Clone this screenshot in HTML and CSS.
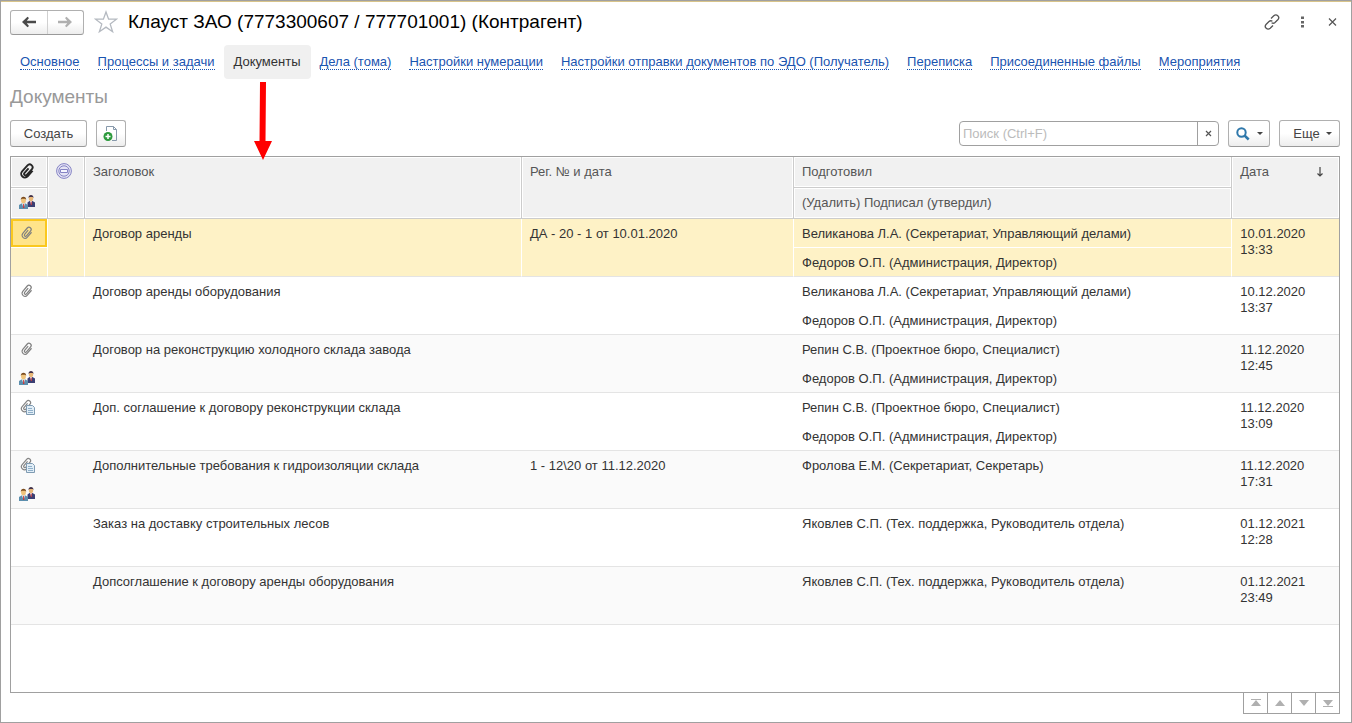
FILE: index.html
```html
<!DOCTYPE html>
<html lang="ru">
<head>
<meta charset="utf-8">
<title>Клауст ЗАО (Контрагент)</title>
<link rel="stylesheet" href="styles.css">
</head>
<body>
<svg class="defs" aria-hidden="true">
  <symbol id="clip" viewBox="0 0 16 16">
    <path transform="rotate(40 8 8)" d="M11 4.500V11a3 3 0 0 1-6 0V4a2.200 2.200 0 0 1 4.400 0v6.500a1.200 1.200 0 0 1-2.400 0V5" fill="none" stroke="currentColor" stroke-width="1.200"/>
  </symbol>
  <symbol id="clipbold" viewBox="0 0 16 16">
    <path transform="rotate(42 8 8)" d="M12 4v7.500a3.700 3.700 0 0 1-7.400 0v-8a2.900 2.900 0 0 1 5.800 0v7.500a1.500 1.500 0 0 1-3 0V5" fill="none" stroke="#262626" stroke-width="1.900"/>
  </symbol>
  <symbol id="clipdoc" viewBox="0 0 16 16">
    <path transform="rotate(40 7 7)" d="M10.500 3.500V10a3 3 0 0 1-6 0V3a2.200 2.200 0 0 1 4.400 0v6.500a1.200 1.200 0 0 1-2.400 0V4" fill="none" stroke="#858585" stroke-width="1.200"/>
    <path d="M7.500 6.500h6l2 2v7h-8z" fill="#e2eef7" stroke="#7f9bb2"/>
    <path d="M9 9.500h4M9 11.500h5M9 13.500h5" stroke="#8fb0ca"/>
  </symbol>
  <symbol id="people" viewBox="0 0 16 16">
    <path d="M8.500 12V8.500L10.500 7h3L16 8.500V13H9z" fill="#3c3f73"/>
    <path d="M11 7h2l-.8 4z" fill="#fff"/><path d="M11.700 7.500h.9l.2 3.500h-1z" fill="#c33"/>
    <ellipse cx="12" cy="4.500" rx="2.200" ry="2.800" fill="#e8b878"/>
    <path d="M9.500 4c-.3-4 5.300-4 5 0l-.8-1h-3.200z" fill="#43324a"/>
    <path d="M0 15v-4l2.500-1.500h4L9 11v4z" fill="#5c8fae"/>
    <path d="M3 9.500h3L4.600 14z" fill="#fff"/><path d="M4.200 10h.9l.3 4h-1.400z" fill="#c33"/>
    <ellipse cx="4.500" cy="6.500" rx="2.400" ry="3" fill="#f0c47c"/>
    <path d="M1.800 6c-.3-4.300 5.700-4.300 5.400 0l-.9-1.300H2.700z" fill="#7a4a1c"/>
  </symbol>
</svg>
<div class="window">
  <header class="titlebar">
    <div class="history">
      <button type="button" aria-label="Назад"><svg width="16" height="12" viewBox="0 0 16 12"><path d="M1 6 6.500.8 8 2 5.800 4.800H15v2.400H5.800L8 10l-1.500 1.200z" fill="#4a4a4a"/></svg></button>
      <button type="button" aria-label="Вперед"><svg width="16" height="12" viewBox="0 0 16 12"><path d="M15 6 9.500.8 8 2l2.200 2.800H1v2.400h9.200L8 10l1.500 1.200z" fill="#b0b0b0"/></svg></button>
    </div>
    <button type="button" class="plain star" aria-label="В избранное"><svg width="24" height="24" viewBox="0 0 24 24"><path d="m12 2 2.600 7.200h7.900l-6.300 4.900 2.400 7.600-6.600-4.600-6.600 4.600 2.400-7.600-6.300-4.900h7.900z" fill="#fff" stroke="#b4b9c0" stroke-width="1.300"/></svg></button>
    <h1>Клауст ЗАО (7773300607 / 777701001) (Контрагент)</h1>
    <div class="winbuttons">
      <button type="button" class="plain" aria-label="Ссылка"><svg width="16" height="16" viewBox="0 0 16 16"><g fill="none" stroke="#555" stroke-width="1.300"><path d="M7 4.500 9.800 1.800c2.700-2.400 6.500.9 4.200 3.700l-3 3c-1 .9-2.400.9-3.400.2"/><path d="M9 11.500 6.200 14.200c-2.700 2.400-6.500-.9-4.200-3.700l3-3c1-.9 2.400-.9 3.400-.2"/></g></svg></button>
      <button type="button" class="plain" aria-label="Меню"><svg width="16" height="16" viewBox="0 0 16 16"><path d="M7 2.500h3v2.500H7zM7 7h3v2.500H7zM7 11h3v2.500H7z" fill="#666"/></svg></button>
      <button type="button" class="plain" aria-label="Закрыть"><svg width="16" height="16" viewBox="0 0 16 16"><path d="m5 4.500 7 7m0-7-7 7" stroke="#555" stroke-width="1.200"/></svg></button>
    </div>
  </header>
  <nav class="tabs">
    <a href="#">Основное</a>
    <a href="#">Процессы и задачи</a>
    <a href="#" class="active" aria-current="page">Документы<svg class="pointer" width="20" height="78" viewBox="0 0 20 78" aria-hidden="true"><path d="M7 0h6l-.5 59H19L10 78 1 59h5.500z" fill="#f00"/></svg></a>
    <a href="#">Дела (тома)</a>
    <a href="#">Настройки нумерации</a>
    <a href="#">Настройки отправки документов по ЭДО (Получатель)</a>
    <a href="#">Переписка</a>
    <a href="#">Присоединенные файлы</a>
    <a href="#">Мероприятия</a>
  </nav>
  <h2>Документы</h2>
  <div class="toolbar">
    <button type="button" class="btn create">Создать</button>
    <button type="button" class="btn add" aria-label="Создать из файла"><svg width="16" height="16" viewBox="0 0 16 16"><path d="M3.500 5V.500h7l3 3v11H9M10.500.500v3h3" fill="none" stroke="#8799ab"/><circle cx="5" cy="10.500" r="4.500" fill="#2c9a3c"/><path d="M5 8v5M2.500 10.500h5" stroke="#fff" stroke-width="1.500"/></svg></button>
    <div class="search">
      <input type="text" placeholder="Поиск (Ctrl+F)" aria-label="Поиск">
      <button type="button" aria-label="Очистить"><svg width="7" height="7" viewBox="0 0 7 7"><path d="m1 1 5 5m0-5L1 6" stroke="#555" stroke-width="1.200"/></svg></button>
    </div>
    <button type="button" class="btn find" aria-label="Найти"><svg width="14" height="14" viewBox="0 0 14 14"><circle cx="5.500" cy="5.500" r="4.200" fill="none" stroke="#2f78ab" stroke-width="2"/><path d="m8.500 8.500 4.200 4" stroke="#2f78ab" stroke-width="2.500"/></svg><span class="caret"></span></button>
    <button type="button" class="btn more">Еще<span class="caret"></span></button>
  </div>
  <main class="list">
    <table>
      <colgroup><col class="c-icon"><col class="c-icon"><col class="c-title"><col class="c-reg"><col class="c-person"><col></colgroup>
      <thead>
        <tr>
          <th class="ic"><svg class="i" role="img" aria-label="Файлы"><use href="#clipbold"/></svg></th>
          <th rowspan="2" class="ic"><svg class="i" viewBox="0 0 16 16" role="img" aria-label="Печать"><g fill="none" stroke="#8583c4"><circle cx="8" cy="8" r="7.400" fill="#e4e3f4"/><circle cx="8" cy="8" r="5.200"/><path d="M4.500 6.500h7v3h-7z" fill="#f5f5ff"/></g></svg></th>
          <th rowspan="2">Заголовок</th>
          <th rowspan="2">Рег. № и дата</th>
          <th>Подготовил</th>
          <th rowspan="2" class="last"><div class="sorted">Дата<svg width="8" height="12" viewBox="0 0 8 12"><path d="M4 1v9M1.500 7.500 4 10l2.500-2.500" fill="none" stroke="#444" stroke-width="1.200"/></svg></div></th>
        </tr>
        <tr>
          <th class="ic"><svg class="i" role="img" aria-label="Участники"><use href="#people"/></svg></th>
          <th>(Удалить) Подписал (утвердил)</th>
        </tr>
      </thead>
      <tbody class="selected">
        <tr><td class="ic current"><svg class="i"><use href="#clip"/></svg></td><td rowspan="2"></td><td rowspan="2">Договор аренды</td><td rowspan="2">ДА - 20 - 1 от 10.01.2020</td><td>Великанова Л.А. (Секретариат, Управляющий делами)</td><td rowspan="2" class="last">10.01.2020<br>13:33</td></tr>
        <tr><td></td><td>Федоров О.П. (Администрация, Директор)</td></tr>
      </tbody>
      <tbody>
        <tr><td class="ic"><svg class="i"><use href="#clip"/></svg></td><td rowspan="2"></td><td rowspan="2">Договор аренды оборудования</td><td rowspan="2"></td><td>Великанова Л.А. (Секретариат, Управляющий делами)</td><td rowspan="2">10.12.2020<br>13:37</td></tr>
        <tr><td></td><td>Федоров О.П. (Администрация, Директор)</td></tr>
      </tbody>
      <tbody class="alt">
        <tr><td class="ic"><svg class="i"><use href="#clip"/></svg></td><td rowspan="2"></td><td rowspan="2">Договор на реконструкцию холодного склада завода</td><td rowspan="2"></td><td>Репин С.В. (Проектное бюро, Специалист)</td><td rowspan="2">11.12.2020<br>12:45</td></tr>
        <tr><td class="ic"><svg class="i"><use href="#people"/></svg></td><td>Федоров О.П. (Администрация, Директор)</td></tr>
      </tbody>
      <tbody>
        <tr><td class="ic"><svg class="i"><use href="#clipdoc"/></svg></td><td rowspan="2"></td><td rowspan="2">Доп. соглашение к договору реконструкции склада</td><td rowspan="2"></td><td>Репин С.В. (Проектное бюро, Специалист)</td><td rowspan="2">11.12.2020<br>13:09</td></tr>
        <tr><td></td><td>Федоров О.П. (Администрация, Директор)</td></tr>
      </tbody>
      <tbody class="alt">
        <tr><td class="ic"><svg class="i"><use href="#clipdoc"/></svg></td><td rowspan="2"></td><td rowspan="2">Дополнительные требования к гидроизоляции склада</td><td rowspan="2">1 - 12\20 от 11.12.2020</td><td>Фролова Е.М. (Секретариат, Секретарь)</td><td rowspan="2">11.12.2020<br>17:31</td></tr>
        <tr><td class="ic"><svg class="i"><use href="#people"/></svg></td><td></td></tr>
      </tbody>
      <tbody>
        <tr><td></td><td rowspan="2"></td><td rowspan="2">Заказ на доставку строительных лесов</td><td rowspan="2"></td><td>Яковлев С.П. (Тех. поддержка, Руководитель отдела)</td><td rowspan="2">01.12.2021<br>12:28</td></tr>
        <tr><td></td><td></td></tr>
      </tbody>
      <tbody class="alt">
        <tr><td></td><td rowspan="2"></td><td rowspan="2">Допсоглашение к договору аренды оборудования</td><td rowspan="2"></td><td>Яковлев С.П. (Тех. поддержка, Руководитель отдела)</td><td rowspan="2">01.12.2021<br>23:49</td></tr>
        <tr><td></td><td></td></tr>
      </tbody>
    </table>
  </main>
  <div class="pager">
    <button type="button" aria-label="В начало"><svg width="10" height="8" viewBox="0 0 10 8"><path d="M0 0h10v1H0zM5 1l5 6H0z"/></svg></button>
    <button type="button" aria-label="Вверх"><svg width="10" height="8" viewBox="0 0 10 8"><path d="m5 1 5 6H0z"/></svg></button>
    <button type="button" aria-label="Вниз"><svg width="10" height="8" viewBox="0 0 10 8"><path d="m5 7 5-6H0z"/></svg></button>
    <button type="button" aria-label="В конец"><svg width="10" height="8" viewBox="0 0 10 8"><path d="M0 7h10v1H0zM5 7l5-6H0z"/></svg></button>
  </div>
</div>
</body>
</html>
```
FILE: styles.css
```css
* { box-sizing: border-box; }

body {
  margin: 0;
  font: 13px/16px "Liberation Sans", Arial, sans-serif;
  color: #333;
  background: #fff;
}

button, input { font: inherit; color: inherit; }
button { padding: 0; display: flex; align-items: center; justify-content: center; }
svg { display: block; flex: none; }
.defs { position: absolute; width: 0; height: 0; }

.window {
  display: flex;
  flex-direction: column;
  min-height: 100vh;
  padding: 8px 11px 8px 9px;
  border: 1px solid #a0a0a0;
  box-shadow: inset 0 1px #d8c48a;
}

.titlebar { display: flex; align-items: center; height: 26px; }

.history {
  display: flex;
  width: 74px;
  height: 25px;
  border: 1px solid #b0b0b0;
  border-bottom-color: #999;
  border-radius: 3px;
  background: linear-gradient(#fff 50%, #ededed);
}
.history button { flex: 1; border: 0; background: none; }
.history button + button { border-left: 1px solid #d0d0d0; }

.plain { border: 0; background: none; }
.star { margin: 0 10px; }

h1 { margin: 0; font-size: 19px; line-height: 24px; font-weight: normal; color: #000; }
.winbuttons { display: flex; gap: 14px; margin-left: auto; }

.tabs { display: flex; align-items: center; height: 34px; margin-top: 10px; padding-left: 1px; }
.tabs a {
  margin: 0 9px;
  color: #1a54b0;
  text-decoration: none;
  border-bottom: 1px dotted #1a54b0;
  line-height: 14px;
  padding-top: 1px;
  white-space: nowrap;
}
.tabs .active {
  position: relative;
  margin: 0;
  padding: 0 10px;
  line-height: 34px;
  color: #333;
  background: #f0f0f0;
  border: 0;
  border-radius: 4px;
}
.pointer { position: absolute; left: 29px; top: 37px; z-index: 1; }

h2 { margin: 6px 0 0; font-size: 19px; line-height: 24px; font-weight: normal; color: #999; }

.toolbar { display: flex; align-items: center; margin-top: 11px; }
.btn {
  height: 27px;
  color: #444;
  border: 1px solid #b0b0b0;
  border-bottom-color: #999;
  border-radius: 3px;
  background: linear-gradient(#fff 50%, #ededed);
}
.create { width: 77px; }
.add { width: 30px; margin-left: 9px; }
.search {
  display: flex;
  width: 260px;
  height: 25px;
  margin: 0 9px 0 auto;
  border: 1px solid #a0a0a0;
  border-radius: 4px;
}
.search input { flex: 1; min-width: 0; padding: 0 3px; border: 0; background: none; outline: 0; }
.search input::placeholder { color: #bbb; opacity: 1; }
.search button { width: 21px; border: 0; border-left: 1px solid #a0a0a0; background: none; }
.find { width: 42px; gap: 7px; }
.more { width: 61px; margin-left: 9px; gap: 6px; padding-left: 6px; }
.caret { border: 3px solid transparent; border-top-color: #444; border-bottom: 0; }

.list { flex: 1; margin-top: 9px; border: 1px solid #a0a0a0; }

table { width: 100%; table-layout: fixed; border-collapse: separate; border-spacing: 0; }
.c-icon { width: 37px; }
.c-title { width: 437px; }
.c-reg { width: 272px; }
.c-person { width: 33%; }

th, td { padding: 7px 8px 5px; text-align: left; vertical-align: top; font-weight: normal; }
th {
  height: 31px;
  color: #555;
  background: #f1f1f1;
  border-right: 1px solid #ccc;
  border-bottom: 1px solid #ccc;
  box-shadow: inset 0 0 0 1px #fff;
}
td { height: 29px; }
td[rowspan], tr:last-child td { border-bottom: 1px solid #e4e4e4; }
.alt td { background: #fafafa; }
.selected td { background: #fef2c6; border-right: 1px solid #fff; }
.selected tr:first-child td:not([rowspan]) { border-bottom: 1px solid #fff; }
.selected .current { background: #ffe48a; box-shadow: inset 0 0 0 2px #fac81e; }
th.last, .selected .last { border-right: 0; }
.ic { padding-top: 6px; color: #808080; }
.i { width: 16px; height: 16px; }
.sorted { display: flex; justify-content: space-between; align-items: center; padding-right: 7px; }

.pager { display: flex; justify-content: flex-end; }
.pager button {
  width: 25px;
  height: 22px;
  margin: -1px 0 0 -1px;
  border: 1px solid #a0a0a0;
  background: #fff;
  fill: #b0b0b0;
}
```
